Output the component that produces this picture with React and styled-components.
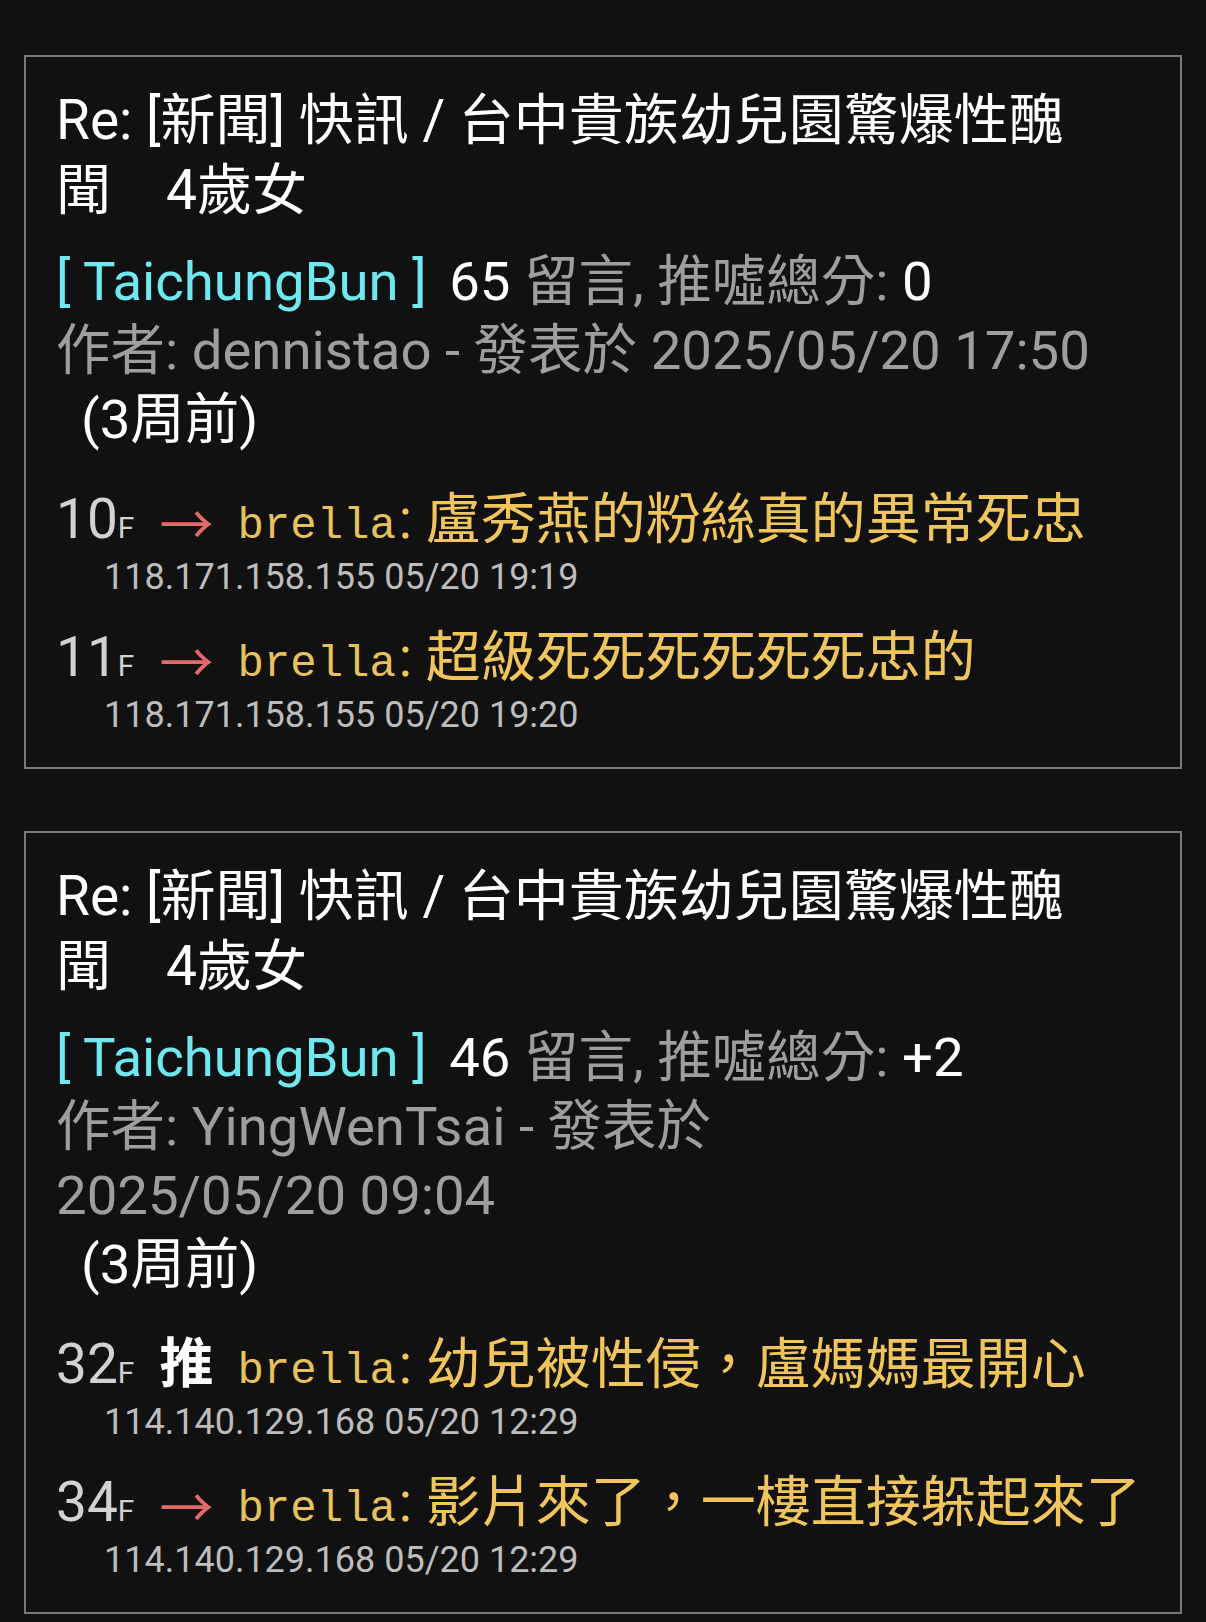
import React from "react";
import styled, { createGlobalStyle } from "styled-components";

const GlobalStyle = createGlobalStyle`
  html, body {
    margin: 0;
    padding: 0;
    background: #111111;
  }
  body {
    font-family: Roboto, "Noto Sans CJK TC", sans-serif;
    overflow: hidden;
  }
`;

const Page = styled.main`
  padding: 55px 24px 0;
  display: flex;
  flex-direction: column;
  gap: 62px;
`;

const Card = styled.section`
  border: 2px solid #777777;
  padding: 28px 30px 28px 30px;
  color: #ffffff;
  font-size: 55px;
`;

const Title = styled.h2`
  margin: 0 0 22px 0;
  padding-right: 55px;
  font-size: 55px;
  font-weight: 400;
  line-height: 70px;
  color: #ffffff;
`;

const Meta = styled.div`
  padding-right: 30px;
  font-size: 54.5px;
  line-height: 69px;
  color: #9e9e9e;
`;

const Board = styled.span`
  color: #6fe9ef;
`;

const Strong = styled.span`
  margin-left: ${(p) => p.$gap || 0}px;
  color: #ffffff;
`;

const Stamp = styled.span`
  white-space: nowrap;
`;

const Ago = styled.div`
  margin-left: 25px;
  color: #ffffff;
`;

const CommentList = styled.div`
  margin-top: 31px;
  display: flex;
  flex-direction: column;
  gap: 22px;
`;

const CommentLine = styled.div`
  white-space: nowrap;
  line-height: 68px;
`;

const Floor = styled.span`
  color: #d2d2d2;
`;

const FloorSuffix = styled.span`
  font-size: 30px;
  line-height: 1;
  color: #d2d2d2;
`;

const Mark = styled.span`
  margin-left: 25px;
  font-family: "Noto Sans CJK TC", sans-serif;
  font-size: 54px;
  line-height: 1;
  vertical-align: ${(p) => (p.$push ? "0" : "-7px")};
  font-weight: ${(p) => (p.$push ? 700 : 400)};
  color: ${(p) => (p.$push ? "#ffffff" : "#e46a6a")};
`;

const Author = styled.span`
  margin-left: 24px;
  font-family: "Liberation Mono", monospace;
  font-size: 44px;
  line-height: 1;
  color: #e6c15e;
`;

const Content = styled.span`
  margin-left: 3px;
  color: #f0c55c;
`;

const IpLine = styled.div`
  padding-left: 48px;
  font-size: 36px;
  line-height: 48px;
  color: #bdbdbd;
`;

const posts = [
  {
    title: "Re: [新聞] 快訊 / 台中貴族幼兒園驚爆性醜聞\u30004歲女",
    board: "TaichungBun",
    count: 65,
    score: "0",
    author: "dennistao",
    date: "2025/05/20 17:50",
    comments: [
      { floor: 10, tag: "→", user: "brella", text: "盧秀燕的粉絲真的異常死忠", ip: "118.171.158.155 05/20 19:19" },
      { floor: 11, tag: "→", user: "brella", text: "超級死死死死死死忠的", ip: "118.171.158.155 05/20 19:20" },
    ],
  },
  {
    title: "Re: [新聞] 快訊 / 台中貴族幼兒園驚爆性醜聞\u30004歲女",
    board: "TaichungBun",
    count: 46,
    score: "+2",
    author: "YingWenTsai",
    date: "2025/05/20 09:04",
    comments: [
      { floor: 32, tag: "推", user: "brella", text: "幼兒被性侵，盧媽媽最開心", ip: "114.140.129.168 05/20 12:29" },
      { floor: 34, tag: "→", user: "brella", text: "影片來了，一樓直接躲起來了", ip: "114.140.129.168 05/20 12:29" },
    ],
  },
];

function Comment({ c }) {
  return (
    <div>
      <CommentLine>
        <Floor>{c.floor}</Floor>
        <FloorSuffix>F</FloorSuffix>
        <Mark $push={c.tag === "推"}>{c.tag}</Mark>
        <Author>{c.user}</Author>
        <Content>: {c.text}</Content>
      </CommentLine>
      <IpLine>{c.ip}</IpLine>
    </div>
  );
}

function PostCard({ post }) {
  return (
    <Card>
      <Title>{post.title}</Title>
      <Meta>
        <div>
          <Board>[ {post.board} ]</Board> <Strong $gap={9}>{post.count}</Strong> 留言, 推噓總分:{" "}
          <Strong>{post.score}</Strong>
        </div>
        <div>
          作者: {post.author} - 發表於 <Stamp>{post.date}</Stamp>
        </div>
        <Ago>(3周前)</Ago>
      </Meta>
      <CommentList>
        {post.comments.map((c) => (
          <Comment key={c.floor} c={c} />
        ))}
      </CommentList>
    </Card>
  );
}

export default function App() {
  return (
    <>
      <GlobalStyle />
      <Page>
        {posts.map((p, i) => (
          <PostCard key={i} post={p} />
        ))}
      </Page>
    </>
  );
}
